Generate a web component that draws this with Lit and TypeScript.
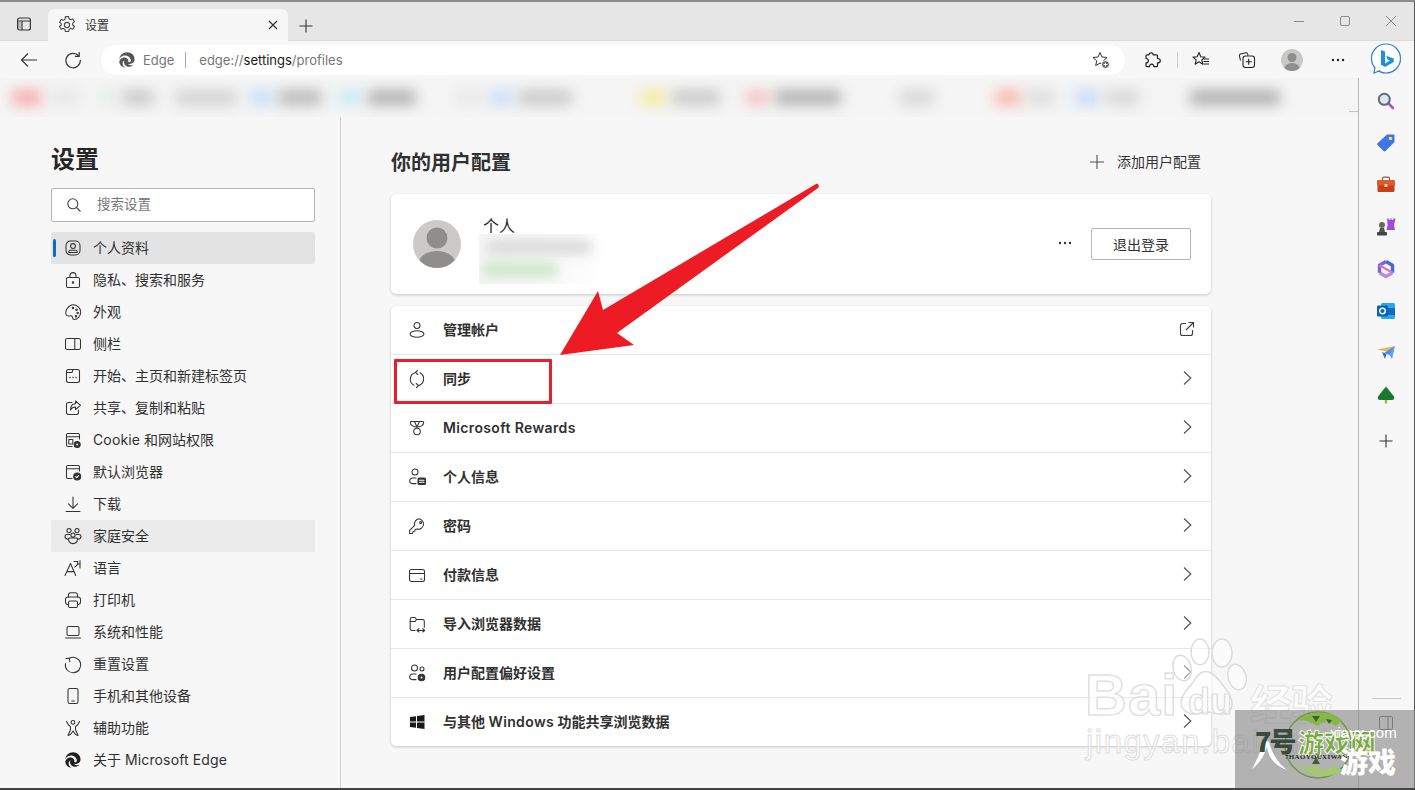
import { LitElement, html, css, svg } from "lit";
import { customElement } from "lit/decorators.js";

const edge = (s: number, c = "#1f1f1f") => html`<svg width=${s} height=${s} viewBox="0 0 16 16"><path fill=${c} d="M8 .3C3.9.3.7 3.4.3 7.2 1.3 4.9 3.5 3.6 5.9 3.6c3.1 0 5.9 2.2 5.9 4.8 0 1-.6 1.8-1.6 1.8-.7 0-1-.2-1-.5 0-.2.2-.4.2-1 0-1.900-1.800-3.300-3.900-3.300-2.700 0-5 2.100-5.200 4.400.3 3.400 3 5.900 6.300 5.800-1.800-.7-3-2.300-3-4.100 0-1.400.8-2.600 1.800-3.300-.3.600-.4 1.100-.4 1.700 0 2.700 2.400 4.900 5 4.900 1.100 0 2.500-.4 3.700-1.300.5-.4.4-.8-.1-.6-.5.200-1.200.3-1.900.3-1.500 0-2.300-.5-2.300-.9 0-.2.2-.3.600-.3 2.200 0 5.500-1 5.500-4.500C15.700 3.400 12.300.3 8 .3z"/></svg>`;

const s20 = (body: unknown) => html`<svg class="ic" width="20" height="20" viewBox="0 0 20 20" fill="none" stroke="#333" stroke-width="1.05" stroke-linecap="round" stroke-linejoin="round">${body}</svg>`;

const latin = (t: string) => t.split(/([A-Za-z]+(?: [A-Za-z]+)*)/).map((p, i) => (i % 2 ? html`<span class="lat">${p}</span>` : p));

const navIcons: Record<string, unknown> = {
  profile: s20(svg`<rect x="3" y="3" width="14" height="14" rx="4.500"/><circle cx="10" cy="8" r="2.400"/><path d="M5.800 14.400v-.4c0-1 .8-1.700 1.700-1.700h5c1 0 1.700.7 1.700 1.700v.4z"/>`),
  lock: s20(svg`<rect x="3.500" y="7.500" width="13" height="10" rx="1.500"/><path d="M7 7.500V5.600a3 3 0 016 0v1.900"/><circle cx="10" cy="12.500" r=".7" fill="#333"/>`),
  palette: s20(svg`<path d="M10 2.700c4.200 0 7.700 3.200 7.700 7.300 0 4.300-3.400 7.500-6.400 7.500-2.300 0-1.400-2.200-2.200-3.200-1-1.300-3.800.6-5.400-.9-1.500-1.500-1.200-4.800.8-7.300C6 4 7.900 2.700 10 2.700z"/><circle cx="13.500" cy="7.700" r=".7"/><circle cx="14.700" cy="11" r=".7"/><circle cx="10" cy="6" r=".7"/><circle cx="13" cy="14.200" r=".7"/>`),
  sidebar: s20(svg`<rect x="2.500" y="4.500" width="15" height="11" rx="1.800"/><path d="M11.800 4.500v11"/>`),
  start: s20(svg`<rect x="3.500" y="3.500" width="13" height="13" rx="2"/><path d="M3.500 6.500h5.500l1-3" /><path d="M7 11.500h.01M10 11.500h.01M13 11.500h.01" stroke-width="1.500"/>`),
  share: s20(svg`<path d="M9 4.500H5.500a2 2 0 00-2 2v8a2 2 0 002 2h8a2 2 0 002-2V12"/><path d="M12.500 3l5 4.300-5 4.200V9c-2.500 0-4 1-5 3 0-3.500 1.800-6 5-6.200z"/>`),
  cookie: s20(svg`<path d="M9 16.500H5a1.500 1.500 0 01-1.500-1.500V5A1.500 1.500 0 015 3.500h10A1.500 1.500 0 0116.500 5v4M3.500 6.800h13"/><rect x="5.800" y="9.500" width="4" height="4.500"/><circle cx="14.200" cy="14.500" r="3" fill="#333"/><circle cx="14.200" cy="14.500" r=".9" fill="#fff" stroke="none"/>`),
  browser: s20(svg`<path d="M9 16.500H5a1.500 1.500 0 01-1.500-1.500V5A1.500 1.500 0 015 3.500h10A1.500 1.500 0 0116.500 5v4M3.500 6.800h13"/><circle cx="14.200" cy="14.500" r="3.500" fill="#333"/><path d="M12.700 14.600l1 1 1.900-2" stroke="#fff"/>`),
  download: s20(svg`<path d="M10 3v11M5.500 9.800L10 14.300l4.500-4.500M3 17.500h14"/>`),
  family: s20(svg`<circle cx="6" cy="4.600" r="2.100"/><circle cx="14" cy="4.600" r="2.100"/><circle cx="10" cy="9" r="2.100"/><path d="M6.800 8.500H3.600a1.800 1.800 0 00-1.600 1.800c0 1.500 1.200 2.800 3 3M13.200 8.500h3.200a1.800 1.800 0 011.600 1.800c0 1.500-1.200 2.800-3 3M5.500 13c0 3 2.100 4.600 4.500 4.600s4.500-1.600 4.500-4.600c0-.6-.5-1-1-1h-7c-.5 0-1 .4-1 1z"/>`),
  language: s20(svg`<path d="M2 17.500L7.500 5.500l5.200 12M3.900 13.600h7.200"/><path d="M11 3.500h3.800c0 2.800-1.200 4.600-3.200 5.600M17 2.500v7.500M17 6h-2"/>`),
  print: s20(svg`<path d="M5.500 7V5a2.200 2.200 0 012.200-2.200h4.600A2.200 2.200 0 0114.500 5v2"/><rect x="2.500" y="7" width="15" height="7.500" rx="2.500"/><rect x="5.500" y="11" width="9" height="6.500" rx="1.500" fill="#f7f7f7"/>`),
  laptop: s20(svg`<rect x="4" y="4.500" width="12" height="9" rx="1.500"/><path d="M2.500 16h15"/>`),
  reset: s20(svg`<path d="M6.300 4.300a7.700 7.700 0 11-3.800 5.200"/><path d="M2.900 4.600l3.500-.4.400 3.500"/>`),
  phone: s20(svg`<rect x="5" y="2.500" width="10" height="15" rx="1.800"/><path d="M8.700 15h2.600"/>`),
  access: s20(svg`<circle cx="10" cy="4.300" r="1.900"/><path d="M3.500 3.500c1.300 3 3 4.700 4 5.200v3.100L5 17.300c1.800.5 2.800-.6 5-4.300 2.200 3.700 3.200 4.800 5 4.300l-2.500-5.500V8.700c1-.5 2.700-2.200 4-5.200"/>`),
  edge: html`<span class="edgewrap">${edge(16)}</span>`,
};

const rowIcons: Record<string, unknown> = {
  account: s20(svg`<circle cx="10" cy="5.500" r="3"/><ellipse cx="10" cy="14" rx="7" ry="3.300"/>`),
  sync: s20(svg`<path d="M8.500 3.400A7 7 0 007 16.300M11.500 16.600A7 7 0 0013 3.700"/><path d="M10.500 1.500L8.500 3.400l2.300 2.100M9.500 18.500l2-1.900-2.300-2.100"/>`),
  rewards: s20(svg`<path d="M4 3.500h12c.5 0 .7.500.7 1 0 3-3.700 4.500-6.700 4.500S3.300 7.500 3.300 4.500c0-.5.200-1 .7-1z"/><path d="M7.500 3.500L10 9l2.500-5.500"/><circle cx="10" cy="13.500" r="3.300"/>`),
  personal: s20(svg`<circle cx="8" cy="5" r="3"/><path d="M9 11H5.500a2.800 2.800 0 000 5.600H9"/><rect x="11" y="11" width="7.500" height="6.500" rx="1" fill="#333"/><path d="M12.500 13.300h4.500M12.500 15.300h4.500" stroke="#fff"/>`),
  key: s20(svg`<path d="M12.500 2.800a5 5 0 00-4.800 6.500L2.600 14.400v3h3l.4-1.800 1.700-.3.400-1.700 2-.5a5 5 0 102.400-10.100z"/><circle cx="13.600" cy="6.500" r="1"/>`),
  card: s20(svg`<rect x="2.500" y="4.500" width="15" height="12" rx="2"/><path d="M2.500 8.500h15M13.500 14h1.500"/>`),
  folder: s20(svg`<path d="M8 16.500H5A1.800 1.800 0 013.200 14.700V5.300A1.800 1.800 0 015 3.500h3l1.500 2h6a1.800 1.800 0 011.800 1.800v6"/><path d="M3.200 7.500h5l1.300-2M10 16.500h7.500M12 14.700l-2 1.800 2 1.500M15.700 14.700l2 1.800-2 1.500"/>`),
  prefs: s20(svg`<circle cx="7.500" cy="5" r="3"/><circle cx="15" cy="6" r="2"/><path d="M9 11H5.500a2.800 2.800 0 000 5.600H9"/><circle cx="14.500" cy="14.500" r="3.300" fill="#333"/><circle cx="14.500" cy="14.500" r="1" fill="#fff" stroke="none"/>`),
  windows: html`<svg class="ic" width="20" height="20" viewBox="0 0 20 20" fill="#1a1a1a"><path d="M3 5l6-.8v5.300H3zM10 4l7.500-1v6.500H10zM3 10.500h6v5.300L3 15zM10 10.500h7.500V17L10 16z"/></svg>`,
};

const nav: [string, string, string?][] = [
  ["profile", "个人资料", "on"], ["lock", "隐私、搜索和服务"], ["palette", "外观"], ["sidebar", "侧栏"],
  ["start", "开始、主页和新建标签页"], ["share", "共享、复制和粘贴"], ["cookie", "Cookie 和网站权限"], ["browser", "默认浏览器"],
  ["download", "下载"], ["family", "家庭安全", "hover"], ["language", "语言"], ["print", "打印机"],
  ["laptop", "系统和性能"], ["reset", "重置设置"], ["phone", "手机和其他设备"], ["access", "辅助功能"], ["edge", "关于 Microsoft Edge"],
];
const rows: [string, string][] = [
  ["account", "管理帐户"], ["sync", "同步"], ["rewards", "Microsoft Rewards"], ["personal", "个人信息"], ["key", "密码"],
  ["card", "付款信息"], ["folder", "导入浏览器数据"], ["prefs", "用户配置偏好设置"], ["windows", "与其他 Windows 功能共享浏览数据"],
];
// left edge (in the bar), width and colour of each blurred bookmark
const blurs: [number, number, string][] = [
  [4, 30, "#f9a8ac"], [42, 30, "#e6e6e6"], [92, 16, "#e4ece4"], [114, 32, "#c8c8c8"], [167, 62, "#d2d2d2"], [242, 22, "#c2dcf6"], [270, 44, "#b8b8b8"], [330, 24, "#c8eaf6"], [360, 48, "#b0b0b0"],
  [447, 30, "#e8e8e8"], [482, 22, "#c6dcf6"], [510, 54, "#c8c8c8"], [632, 26, "#f6ea9a"], [664, 48, "#c8c8c8"], [737, 24, "#f6c2c2"], [767, 66, "#b0b0b0"], [892, 34, "#d6d6d6"], [987, 26, "#f9b4a8"], [1017, 30, "#dcdcdc"], [1067, 24, "#c2daf6"], [1097, 34, "#d6d6d6"], [1182, 90, "#aeaeae"],
];

@customElement("app-root")
export class AppRoot extends LitElement {
  static styles = css`
    :host { display: block; width: 1415px; height: 790px; overflow: hidden; position: relative;
      font-family: Inter, "Noto Sans CJK SC", sans-serif; color: #262626; background: #f7f7f7; }
    * { box-sizing: border-box; }
    .window { height: 790px; display: flex; flex-direction: column; border-top: 2px solid #8c8c8c; border-right: 1px solid #555; border-bottom: 2px solid #444; }
    svg { display: block; flex: none; }

    .tabs { height: 39px; flex: none; background: #e6e6e6; display: flex; align-items: flex-end; border-bottom: 1px solid #dcdcdc; }
    .tabtoggle { width: 48px; height: 32px; display: flex; align-items: center; justify-content: center; margin-bottom: 0; }
    .tab { width: 240px; height: 32px; background: #f7f7f7; border-radius: 6px 6px 0 0; display: flex; align-items: center; padding: 0 9px 0 10px; font-size: 12px; color: #333; margin-bottom: -1px; }
    .tab .t { margin: 0 0 2px 9px; flex: 1; }
    .newtab { margin: 0 0 6px 10px; }
    .spacer { flex: 1; }
    .winbtns { display: flex; align-self: flex-start; margin-top: 11px; }
    .winbtns span { width: 46px; display: flex; justify-content: center; }

    .toolbar { height: 37px; flex: none; background: #f7f7f7; display: flex; align-items: center; padding: 1px 0 0 20px; }
    .tb { flex: none; }
    .tb.refresh { margin-left: 26px; }
    .omni { margin-left: 19px; width: 1024px; height: 30px; background: #fff; border-radius: 15px; display: flex; align-items: center; padding-left: 18px; font-size: 13px; color: #767676; flex: none; }
    .omni .lbl { margin-left: 8px; }
    .omni .sep { width: 1px; height: 16px; background: #a8a8a8; margin: 0 13px 0 11px; }
    .omni b { font-weight: 400; color: #1a1a1a; }
    .omni .star { margin-left: auto; margin-right: 14px; }
    .tools { display: flex; align-items: center; flex: none; padding-left: 19px; height: 100%; }
    .tools .vsep { width: 1px; height: 16px; background: #d0d0d0; margin: 0 14px 0 15px; }
    .tools .favs { margin-right: 28px; }
    .tools .coll { margin-right: 25px; }
    .pavatar { width: 22px; height: 22px; flex: none; border-radius: 50%; background: #c8c8c6; overflow: hidden; margin-right: 27px; }
    .pdots { margin-right: 24px; }

    .below { flex: 1; min-height: 0; display: grid; grid-template-columns: 1358px 1fr; }
    .left { display: flex; flex-direction: column; min-width: 0; }
    .favbar { height: 39px; flex: none; background: #f5f5f5; display: flex; align-items: center; overflow: hidden; padding-left: 8px; position: relative; }
    .favbar i { display: block; height: 15px; filter: blur(7px); flex: none; border-radius: 4px; }
    .favline { position: absolute; right: 0; bottom: 5px; width: 9px; height: 1px; background: #c4c4c4; }
    .content { flex: 1; min-height: 0; display: grid; grid-template-columns: 341px 1fr; }

    .side { border-right: 1px solid #d0d0d0; padding: 27px 25px 0 51px; }
    h1 { margin: 1px 0 -1px; font-size: 24px; line-height: 30px; font-weight: 700; color: #262626; }
    .search { margin-top: 14px; height: 34px; background: #fff; border: 1px solid #b5b5b5; border-radius: 2px; display: flex; align-items: center; padding-left: 14px; font-size: 13.500px; color: #777; }
    .search span { margin: 0 0 5px 15px; }
    .navlist { margin-top: 10px; }
    .nav { height: 32px; display: flex; align-items: center; padding-left: 12px; font-size: 14px; color: #303030; position: relative; border-radius: 2px; }
    .nav .ic { flex: none; }
    .nav .tx { margin: 0 0 2px 10px; white-space: nowrap; }
    .nav .lat { letter-spacing: .14px; }
    .nav.on { background: #e3e3e3; }
    .nav.hover { background: #ebebeb; }
    .nav.on::before { content: ""; position: absolute; left: 2px; top: 7px; width: 3px; height: 18px; background: #0f6cbd; border-radius: 2px; }
    .edgewrap { width: 20px; height: 20px; display: flex; align-items: center; justify-content: center; }

    .main { padding: 0 0 0 50px; width: 870px; }
    .head { height: 77px; display: flex; align-items: center; justify-content: space-between; padding: 13px 10px 0 0; }
    h2 { margin: 2px 0 0; font-size: 20px; font-weight: 700; color: #303030; line-height: 28px; }
    .add { display: flex; align-items: center; font-size: 14px; gap: 13px; color: #333; }
    .add span { margin-bottom: 2px; }
    .card { background: #fff; border-radius: 5px; box-shadow: 0 1px 3px rgba(0,0,0,.2); width: 820px; }
    .profile { height: 100px; display: flex; align-items: center; padding: 0 20px 0 22px; position: relative; }
    .avatar { width: 48px; height: 48px; border-radius: 50%; overflow: hidden; background: #cbcac8; flex: none; }
    .who { margin-left: 22px; align-self: flex-start; padding-top: 21px; font-size: 16px; line-height: 22px; width: 200px; position: relative; }
    .blurbox { position: absolute; left: -4px; top: 40px; width: 130px; height: 50px; background: linear-gradient(90deg, #f6f6f6, #fbfbfb 70%, #fff); overflow: hidden; }
    .blurbox i { position: absolute; display: block; filter: blur(6px); }
    .blurbox .b1 { left: 8px; top: 6px; width: 104px; height: 14px; background: #d9d9d9; }
    .blurbox .b2 { left: 4px; top: 28px; width: 74px; height: 15px; background: #cfe6ca; }
    .dots { margin-left: auto; margin-right: 18px; }
    .btn { width: 100px; height: 32px; border: 1px solid #b5b5b5; border-radius: 2px; display: flex; align-items: center; justify-content: center; font-size: 14px; color: #333; }
    .list { margin-top: 12px; height: 440px; display: flex; flex-direction: column; }
    .row { height: 49px; flex: none; display: flex; align-items: center; padding: 0 16px 0 16px; border-top: 1px solid #e6e6e6; font-size: 14px; font-weight: 600; color: #303030; }
    .row:first-child { border-top: 0; height: 48px; }
    .row .tx { margin-left: 16px; flex: 1; margin-top: -2px; }
    .row .lat { letter-spacing: .36px; }
    .row .end { margin-top: -2px; }

    .rail { border-left: 1px solid #b8b8b8; background: #f7f7f7; display: flex; flex-direction: column; align-items: center; padding: 2px 1px 0 0; position: relative; }
    .rail > span { height: 42px; flex: none; display: flex; align-items: center; justify-content: center; width: 100%; }
    .rail > span.plus { margin-top: 4px; }
    .raildiv { width: 29px; height: 1px; background: #c8c8c8; margin-top: auto; }
    .railtoggle { margin: 17px 0 58px; }

    .overlay { position: absolute; left: 0; top: 0; pointer-events: none; }
    .redbox { position: absolute; left: 394px; top: 359px; width: 158px; height: 45px; border: 3.500px solid #e3202c; border-radius: 1px; }

    .paw { position: absolute; left: 1165px; top: 636px; }
    .bd { position: absolute; left: 1085px; top: 662px; font: 700 58px/66px "Liberation Sans", sans-serif; letter-spacing: 1px; color: rgba(255,255,255,.65); -webkit-text-stroke: 1.500px #e0e0e0; }
    .bdu { position: absolute; left: 1188px; top: 682px; font: 700 36px/40px "Liberation Sans", sans-serif; color: rgba(255,255,255,.5); -webkit-text-stroke: 1.200px #dcdcdc; }
    .bdj { position: absolute; left: 1086px; top: 722px; font: 400 33px/40px "Liberation Sans", sans-serif; letter-spacing: 1.500px; color: rgba(255,255,255,.6); -webkit-text-stroke: 1px #dedede; white-space: nowrap; }
    .bdk { position: absolute; left: 1250px; top: 680px; font: 700 42px/44px "Noto Sans CJK SC", sans-serif; color: rgba(255,255,255,.8); -webkit-text-stroke: 1px #e2e2e2; white-space: nowrap; letter-spacing: -1px; }
    .mark { position: absolute; left: 1235px; top: 710px; width: 180px; height: 78px; background: rgba(135,135,135,.62); }
    .ring { position: absolute; left: 49px; top: 0; }
    .swoosh { position: absolute; left: 16px; top: 30px; }
    .mk7 { position: absolute; left: 20px; top: 14px; font: 900 27px/34px "Noto Sans CJK SC", sans-serif; color: #3a4a3e; letter-spacing: -2px; white-space: nowrap; }
    .mkgame { position: absolute; left: 63px; top: 17px; font: 900 26px/30px "Noto Sans CJK SC", sans-serif; color: #79aa3f; -webkit-text-stroke: .8px #fff; letter-spacing: 0; white-space: nowrap; }
    .mkurl { position: absolute; left: 95px; top: 14px; font: 400 15px/18px "Liberation Sans", sans-serif; color: #fff; white-space: nowrap; }
    .mkpin { position: absolute; left: 50px; top: 42px; font: 700 7px/10px "Liberation Serif", serif; color: #2a2a2a; white-space: nowrap; letter-spacing: .3px; }
    .mkzh { position: absolute; left: 105px; top: 34px; font: 900 28px/34px "Noto Sans CJK SC", sans-serif; color: #fff; white-space: nowrap; }
  `;

  render() {
    const I = "#3a3a3a";
    return html`<div class="window">
      <div class="tabs">
        <div class="tabtoggle"><svg width="16" height="16" viewBox="0 0 16 16" fill="none" stroke="#333" stroke-width="1.200"><rect x="1.600" y="2" width="12.800" height="12" rx="2"/><path d="M1.600 5h12.800M6 5v9" /><rect x="2" y="5" width="4" height="8.600" fill="#8a8a8a" opacity=".5" stroke="none"/></svg></div>
        <div class="tab">
          <svg width="18" height="18" viewBox="1 1 16 16" fill="none" stroke="#4a4a4a" stroke-width="1"><path d="M7.600 1.500h2.800l.4 2 1.500.8 1.900-.7 1.400 2.400-1.500 1.300v1.700l1.500 1.300-1.400 2.400-1.900-.7-1.500.8-.4 2H7.600l-.4-2-1.500-.8-1.900.7-1.400-2.400 1.500-1.300V7.800L2.400 6.500 3.800 4.100l1.900.7 1.500-.8z" stroke-linejoin="round"/><circle cx="9" cy="9" r="2.300"/></svg>
          <span class="t">设置</span>
          <svg width="12" height="12" viewBox="0 0 12 12" stroke="#333" stroke-width="1.200"><path d="M2 2l8 8M10 2l-8 8"/></svg>
        </div>
        <svg class="newtab" width="16" height="16" viewBox="0 0 16 16" stroke="#333" stroke-width="1.100"><path d="M8 1.500v13M1.500 8h13"/></svg>
        <div class="spacer"></div>
        <div class="winbtns">
          <span><svg width="12" height="16" viewBox="0 0 12 16" stroke="#8a8a8a"><path d="M1 8.500h10"/></svg></span>
          <span><svg width="12" height="16" viewBox="0 0 12 16" fill="none" stroke="#8a8a8a"><rect x="1.500" y="3.500" width="9" height="9" rx="1.500"/></svg></span>
          <span><svg width="12" height="16" viewBox="0 0 12 16" stroke="#8a8a8a"><path d="M1 3l10 10M11 3L1 13"/></svg></span>
        </div>
      </div>
      <div class="toolbar">
        <svg class="tb" width="18" height="18" viewBox="0 0 18 18" fill="none" stroke="#333" stroke-width="1.200"><path d="M1.500 9h15.500M8 2.500L1.500 9 8 15.500"/></svg>
        <svg class="tb refresh" width="18" height="18" viewBox="0 0 18 18" fill="none" stroke="#333" stroke-width="1.200"><path d="M14.700 5A7.200 7.200 0 1016.300 9"/><path d="M15.200 1v4.300h-4.300"/></svg>
        <div class="omni">
          ${edge(16, "#555")}<span class="lbl">Edge</span><span class="sep"></span>
          <span>edge://<b>settings</b>/profiles</span>
          <svg class="star" width="20" height="20" viewBox="0 0 20 20" fill="none" stroke="#333" stroke-width="1"><path d="M9 2.500l2 4.500 5 .5-3.700 3.300 1 4.800-4.300-2.500-4.300 2.500 1-4.800L2 7.500l5-.5z" stroke-linejoin="round"/><circle cx="14.500" cy="14.500" r="4" fill="#666" stroke="#fff"/><path d="M14.500 12.500v4M12.500 14.500h4" stroke="#fff"/></svg>
        </div>
        <div class="tools">
          <svg width="18" height="18" viewBox="0 0 18 18" fill="none" stroke="#222" stroke-width="1.200" stroke-linejoin="round"><path d="M7 1.800c1.300 0 2.200 1 2.200 2h3.300c.6 0 1 .4 1 1V7.500c1.500 0 2.800 .7 2.800 2.200s-1.300 2.200-2.800 2.200v2.800c0 .6-.4 1-1 1h-2.600c0-1.500-.9-2.500-2.200-2.500s-2.200 1-2.200 2.500H3c-.6 0-1-.4-1-1v-2.800c1.500 0 2.400-.9 2.400-2.200S3.500 7.500 2 7.500V4.800c0-.6.400-1 1-1h2C5 2.800 5.800 1.800 7 1.800z"/></svg>
          <span class="vsep"></span>
          <svg class="favs" width="18" height="18" viewBox="0 0 18 18" fill="none" stroke="#222" stroke-width="1.100" stroke-linejoin="round"><path d="M7 1.500l1.800 4.200 4.200.4-3.200 2.800 1 4.300L7 10.800l-3.800 2.400 1-4.300L1 6.100l4.200-.4z"/><path d="M11.500 8h5.500M11.500 10.500h5.500M11.500 13h5.500"/></svg>
          <svg class="coll" width="18" height="18" viewBox="0 0 18 18" fill="none" stroke="#222" stroke-width="1.100" stroke-linejoin="round"><path d="M2.500 9.500L1.500 5c-.3-1 .3-1.800 1.200-2l5-1.200c1-.2 1.800.3 2 1.200l.3 1.500"/><rect x="5" y="5" width="11.500" height="11.500" rx="2.500" fill="#f7f7f7"/><path d="M10.700 7.800v6M7.800 10.700h6"/></svg>
          <div class="pavatar"><svg width="22" height="22" viewBox="0 0 22 22"><circle cx="11" cy="8.500" r="4.500" fill="#8f8e8c"/><ellipse cx="11" cy="20" rx="8" ry="6" fill="#8f8e8c"/></svg></div>
          <svg class="pdots" width="16" height="16" viewBox="0 0 16 16" fill="#222"><circle cx="3" cy="8" r="1.200"/><circle cx="8" cy="8" r="1.200"/><circle cx="13" cy="8" r="1.200"/></svg>
          <svg width="32" height="34" viewBox="0 0 32 34"><circle cx="16" cy="15.500" r="14.500" fill="#fff" stroke="#2f7fd6" stroke-width="1.200"/><path d="M5 24l-1 6 6-2.500" fill="#fff" stroke="#2f7fd6" stroke-width="1.200"/><path d="M11 7l4 1.400v12l5-2.800-2.400-1.200-1.400-3.600 7.500 2.700v3.600L15 24l-4-2.200z" fill="#1b8fe0"/></svg>
        </div>
      </div>
      <div class="below">
        <div class="left">
          <div class="favbar">${blurs.map(([x, w, c], n) => html`<i style="margin-left:${x - (n ? blurs[n - 1][0] + blurs[n - 1][1] : 0)}px;width:${w}px;background:${c}"></i>`)}<span class="favline"></span></div>
          <div class="content">
            <div class="side">
              <h1>设置</h1>
              <div class="search"><svg width="16" height="16" viewBox="0 0 16 16" fill="none" stroke="#444" stroke-width="1.100"><circle cx="6.800" cy="6.800" r="5"/><path d="M10.500 10.500l4 4"/></svg><span>搜索设置</span></div>
              <div class="navlist">
                ${nav.map(([i, t, c]) => html`<div class="nav ${c || ""}">${navIcons[i]}<span class="tx">${latin(t)}</span></div>`)}
              </div>
            </div>
            <div class="main">
              <div class="head">
                <h2>你的用户配置</h2>
                <div class="add"><svg width="14" height="14" viewBox="0 0 14 14" stroke="#555" stroke-width="1.100"><path d="M7 0v14M0 7h14"/></svg><span>添加用户配置</span></div>
              </div>
              <div class="card profile">
                <div class="avatar"><svg width="48" height="48" viewBox="0 0 48 48"><circle cx="24" cy="18" r="10.500" fill="#8f8e8c"/><ellipse cx="24" cy="45" rx="19" ry="14" fill="#8f8e8c"/></svg></div>
                <div class="who">个人
                  <div class="blurbox"><i class="b1"></i><i class="b2"></i></div>
                </div>
                <svg class="dots" width="16" height="16" viewBox="0 0 16 16" fill="#333"><circle cx="3" cy="7" r="1.200"/><circle cx="8" cy="7" r="1.200"/><circle cx="13" cy="7" r="1.200"/></svg>
                <div class="btn">退出登录</div>
              </div>
              <div class="card list">
                ${rows.map(([i, t], n) => html`<div class="row">${rowIcons[i]}<span class="tx">${latin(t)}</span>
                  <span class="end">${n === 0
                    ? html`<svg width="16" height="16" viewBox="0 0 16 16" fill="none" stroke="${I}" stroke-width="1.100"><path d="M7 2.500H3.500a2 2 0 00-2 2v8a2 2 0 002 2h8a2 2 0 002-2V9M9.500 1.500h5v5M14.500 1.500L7 9"/></svg>`
                    : html`<svg width="16" height="16" viewBox="0 0 16 16" fill="none" stroke="#555" stroke-width="1.200"><path d="M5 1.500L11.800 8 5 14.500"/></svg>`}</span></div>`)}
              </div>
            </div>
          </div>
        </div>
        <div class="rail">
          <span><svg width="20" height="20" viewBox="0 0 20 20" fill="none"><path d="M12 12l5 5" stroke="#b04fd0" stroke-width="2.600" stroke-linecap="round"/><circle cx="8.300" cy="8.300" r="5.500" fill="#dce7ee" stroke="#5f6b72" stroke-width="2"/></svg></span>
          <span><svg width="20" height="20" viewBox="0 0 20 20"><path d="M11 1.500h6.500c.6 0 1 .4 1 1V9L9.500 18c-.6.600-1.400.600-2 0l-6-6c-.5-.5-.5-1.300 0-1.800z" fill="#3f74ea"/><circle cx="14.500" cy="5.500" r="1.800" fill="#f4e04d"/></svg></span>
          <span><svg width="20" height="20" viewBox="0 0 20 20"><path d="M6.500 5V3.500c0-.8.500-1.300 1.300-1.300h4.400c.8 0 1.300.5 1.300 1.300V5" fill="none" stroke="#8b5a44" stroke-width="1.200"/><rect x="1" y="5" width="18" height="6" rx="1" fill="#e0592a"/><rect x="1.500" y="10.500" width="17" height="6.500" rx="1" fill="#c63f1c"/><rect x="8.500" y="9" width="3" height="3" fill="#f4c8a8"/></svg></span>
          <span><svg width="20" height="20" viewBox="0 0 20 20"><path d="M11 1.500h1.800v1.500h1.500V1.500h1.400V3h1.500V1.500H19.500L18 8l1 5h-8.500l1.200-5z" fill="#a548dd"/><circle cx="6" cy="8" r="3" fill="#666"/><path d="M4 11h4l1 4H3z" fill="#555"/><rect x="1" y="15" width="10" height="3.500" rx="1" fill="#444"/></svg></span>
          <span><svg width="20" height="20" viewBox="0 0 20 20" fill="none" stroke-width="3.400" stroke-linejoin="round"><path d="M10 2.500l6.500 3.700v7.600" stroke="#3e6cd8"/><path d="M16.500 13.800L10 17.500l-6.500-3.700" stroke="#b48ce6"/><path d="M3.500 13.800V6.200L10 2.500" stroke="#7f63d4"/><path d="M3.500 6.200L10 10l6.500 3.800" stroke="#d675c8" stroke-width="2.200"/></svg></span>
          <span><svg width="20" height="20" viewBox="0 0 20 20"><rect x="5" y="2" width="14" height="16" rx="1.500" fill="#28a8ea"/><rect x="12" y="7" width="7" height="7" fill="#0f6cbd"/><rect x="1" y="4.500" width="11" height="11" rx="1" fill="#0a63b8"/><circle cx="6.500" cy="10" r="2.800" fill="none" stroke="#fff" stroke-width="1.400"/></svg></span>
          <span><svg width="20" height="20" viewBox="0 0 20 20"><path d="M1 6.500l18-3.500-4 6.500z" fill="#e7b65a"/><path d="M19 3L8 10l5.500 2z" fill="#4a8cf0"/><path d="M6 9l3 7 1.500-5z" fill="#2c6dd5"/><path d="M13.500 12L19 3l-3 13z" fill="#5aa0f5"/></svg></span>
          <span><svg width="20" height="20" viewBox="0 0 20 20"><rect x="8.800" y="14" width="2.400" height="4.500" fill="#c9a04e"/><path d="M10 1.500l8 10c.6 1.400 0 3.500-2 3.500H4c-2 0-2.600-2.100-2-3.500z" fill="#177a2c"/></svg></span>
          <span class="plus"><svg width="14" height="14" viewBox="0 0 14 14" stroke="#333" stroke-width="1.100"><path d="M7 .5v13M.5 7h13"/></svg></span>
          <div class="raildiv"></div>
          <svg class="railtoggle" width="14" height="14" viewBox="0 0 14 14" fill="none" stroke="#666"><rect x=".5" y=".5" width="13" height="13" rx="1.500"/><path d="M9 .5v13"/></svg>
        </div>
      </div>
    </div>

    <svg class="overlay" width="1415" height="790" viewBox="0 0 1415 790"><path fill="#ed1c24" d="M560 355L598 291 603 310 816 184c2-1 4 2 2 4L617 333 634 345z"/></svg>
    <div class="redbox"></div>

    <svg class="paw" width="90" height="90" viewBox="0 0 90 90" fill="rgba(255,255,255,.45)" stroke="#dcdcdc" stroke-width="1.500"><ellipse cx="17" cy="32" rx="9" ry="13" transform="rotate(-15 17 32)"/><ellipse cx="35" cy="16" rx="9" ry="13"/><ellipse cx="57" cy="17" rx="10" ry="14"/><ellipse cx="72" cy="41" rx="9" ry="13" transform="rotate(-15 72 41)"/><path d="M38 36c8-3 15 7 22 16 7 9 10 18 3 24-7 5-13 0-20 0-8 0-16 6-24-2-7-7 0-18 6-24 5-5 6-12 13-14z"/></svg>
    <div class="bd">Bai</div>
    <div class="bdu">du</div>
    <div class="bdj">jingyan.baidu.com</div>
    <div class="bdk">经验</div>
    <div class="mark">
      <svg class="ring" width="68" height="70" viewBox="0 0 68 70"><circle cx="34" cy="35" r="33" fill="none" stroke="#6f9a3c" stroke-width="1.500"/><path d="M14 10C26 0 46 0 58 10l-6 6-10-5-9 5-9-5z" fill="#86b849"/><path d="M28 6l4 6 4-6zM42 9l3 5 3-4z" fill="#3f5e3a"/><path d="M12 54c12 10 32 18 46 6l-8-4-11 5-10-6-6 3z" fill="#a3c96a"/><path d="M32 47l-4 7h8z" fill="#3f5e3a"/></svg>
      <svg class="swoosh" width="40" height="34" viewBox="0 0 40 34" fill="#fff"><path d="M14 0C10 10 6 20 1 29c7-5 12-13 15-22 1 10 8 19 20 23-8-6-15-16-18-28z"/></svg>
      <span class="mk7">7号</span>
      <span class="mkgame">游戏网</span>
      <span class="mkurl">xiayx.com</span>
      <span class="mkpin">7HAOYOUXIWANG</span>
      <span class="mkzh">游戏</span>
    </div>`;
  }
}
